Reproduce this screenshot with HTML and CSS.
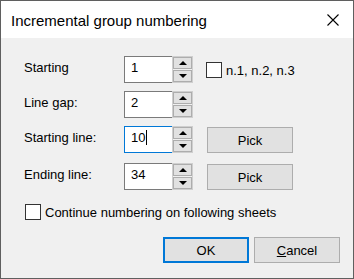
FILE: index.html
```html
<!DOCTYPE html>
<html lang="en">
<head>
  <meta charset="UTF-8" />
  <title>Incremental group numbering</title>
  <link rel="stylesheet" href="styles.css">
</head>
<body>
  <div class="window">
    <div class="titlebar">
      <span class="title">Incremental group numbering</span>
      <svg class="close" width="12" height="12" viewBox="0 0 12 12">
        <path d="M0.5 0.5 L11.5 11.5 M11.5 0.5 L0.5 11.5" stroke="#000" stroke-width="1.1" fill="none" />
      </svg>
    </div>

    <div class="content">
      <div class="row">
        <span class="label">Starting</span>
        <div class="spin">
          <div class="edit">1</div>
          <div class="arrows"><span class="arrow up"></span><span class="arrow down"></span></div>
        </div>
        <div class="check first"><span class="box"></span>n.1, n.2, n.3</div>
      </div>

      <div class="row">
        <span class="label">Line gap:</span>
        <div class="spin">
          <div class="edit">2</div>
          <div class="arrows"><span class="arrow up"></span><span class="arrow down"></span></div>
        </div>
      </div>

      <div class="row">
        <span class="label">Starting line:</span>
        <div class="spin">
          <div class="edit focused">10<span class="caret"></span></div>
          <div class="arrows"><span class="arrow up"></span><span class="arrow down"></span></div>
        </div>
        <button class="btn pick">Pick</button>
      </div>

      <div class="row last">
        <span class="label">Ending line:</span>
        <div class="spin">
          <div class="edit">34</div>
          <div class="arrows"><span class="arrow up"></span><span class="arrow down"></span></div>
        </div>
        <button class="btn pick">Pick</button>
      </div>

      <div class="check continue"><span class="box"></span>Continue numbering on following sheets</div>

      <div class="actions">
        <button class="btn default">OK</button>
        <button class="btn"><u>C</u>ancel</button>
      </div>
    </div>
  </div>
</body>
</html>
```

FILE: styles.css
```css
body {
  margin: 0;
  font-family: "Liberation Sans", Arial, sans-serif;
  font-size: 13px;
  color: #000;
  background: #f0f0f0;
}

.window {
  width: 354px;
  height: 279px;
  box-sizing: border-box;
  border: 1px solid #5f5f5f;
  background: #f0f0f0;
  display: flex;
  flex-direction: column;
}

.titlebar {
  height: 37px;
  background: #fff;
  display: flex;
  align-items: center;
  justify-content: space-between;
  padding: 0 14px 0 10px;
}

.title {
  font-size: 15px;
  padding-top: 1px;
}

.close {
  display: block;
  margin-top: 1px;
}

.content {
  flex: 1;
  padding: 18px 13px 0 23px;
  display: flex;
  flex-direction: column;
}

.row {
  display: flex;
  align-items: center;
  height: 27px;
  margin-bottom: 8px;
}

.row.last {
  margin-top: 2px;
  margin-bottom: 14px;
}

.label {
  width: 100px;
  padding-bottom: 4px;
}

.spin {
  display: flex;
  height: 27px;
  width: 69px;
}

.edit {
  width: 48px;
  box-sizing: border-box;
  border: 1px solid #7a7a7a;
  border-right: none;
  background: #fff;
  padding: 0 0 4px 6px;
  display: flex;
  align-items: center;
}

.edit.focused {
  border-color: #0078d7;
}

.caret {
  display: inline-block;
  width: 1px;
  height: 15px;
  background: #000;
  margin-left: 1px;
}

.arrows {
  width: 21px;
  box-sizing: border-box;
  border: 1px solid #cfcfcf;
  background: #f0f0f0;
  display: flex;
  flex-direction: column;
  gap: 1px;
}

.arrow {
  flex: 1;
  border: 1px solid #adadad;
  background: #e1e1e1;
  display: flex;
  align-items: center;
  justify-content: center;
}

.arrow::after {
  content: "";
  border-left: 4px solid transparent;
  border-right: 4px solid transparent;
}

.arrow.up::after {
  border-bottom: 4px solid #000;
}

.arrow.down::after {
  border-top: 4px solid #000;
}

.check {
  display: flex;
  align-items: center;
}

.check .box {
  width: 16px;
  height: 16px;
  box-sizing: border-box;
  border: 1px solid #333;
  background: #fff;
  margin-right: 4px;
}

.check.first {
  margin-left: 13px;
  margin-top: 1px;
}

.check.continue {
  height: 16px;
  margin-left: 1px;
  margin-bottom: 17px;
}

.btn {
  font-family: inherit;
  font-size: 13px;
  color: #000;
  width: 86px;
  height: 26px;
  border: 1px solid #adadad;
  background: #e1e1e1;
  padding: 0;
}

.btn.pick {
  margin-left: 14px;
  margin-top: 1px;
}

.btn.default {
  border: 2px solid #0078d7;
}

.actions {
  display: flex;
  justify-content: flex-end;
  gap: 5px;
}
```
